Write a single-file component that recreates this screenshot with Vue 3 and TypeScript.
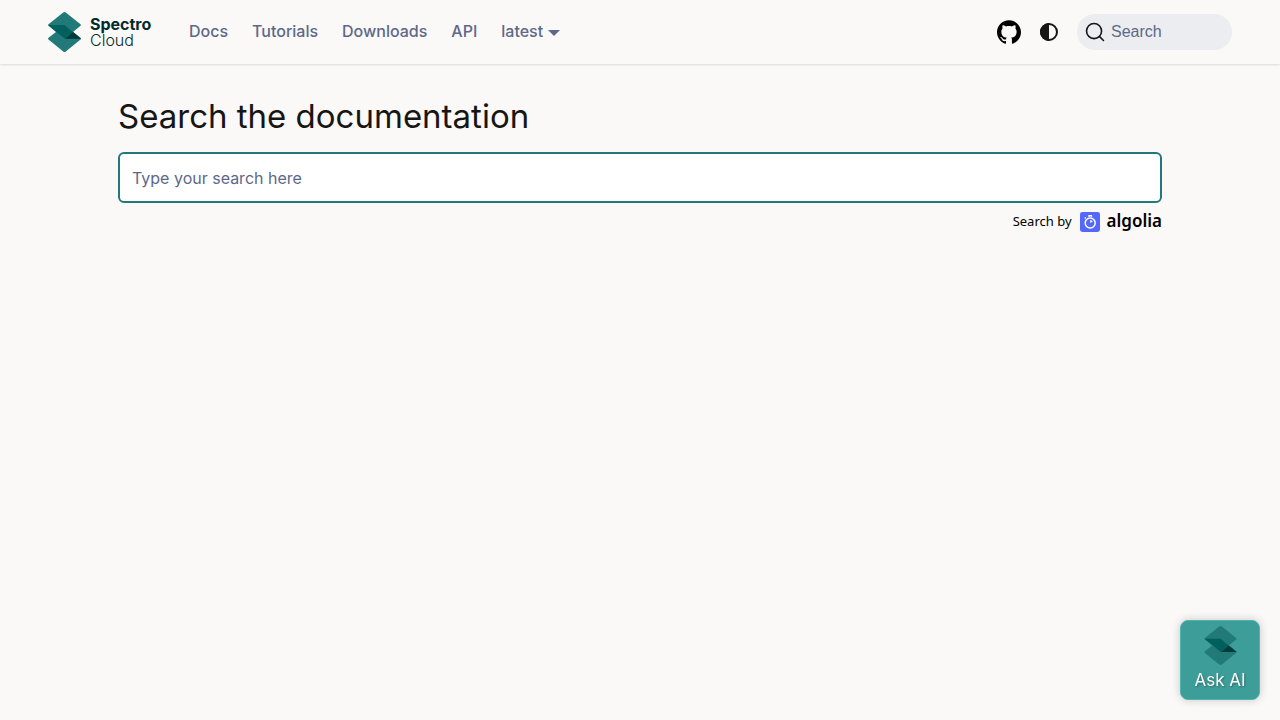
<script setup lang="ts">
import { ref } from 'vue'

const query = ref('')
const links: string[] = ['Docs', 'Tutorials', 'Downloads', 'API']
</script>

<template>
  <div class="page">
    <header class="navbar">
      <a class="brand" href="#" aria-label="Spectro Cloud">
        <svg class="mark" viewBox="0 0 33 40" aria-hidden="true">
          <path d="M15.2 .6Q16.500-.4 17.800 .6L32.500 12.200Q33.400 13 32.500 13.800L25 20 32.500 25.800Q33.400 26.700 32.500 27.600L17.800 39.400Q16.500 40.400 15.200 39.400L.5 27.600Q-.4 26.700 .5 25.800L8 20 .5 13.800Q-.4 13 .5 12.200Z" fill="#217a77" />
          <path d="M.2 13H16.500L33 26.700H16.800Z" fill="#00605e" />
          <path d="M25 20 33 26.700H17.500Z" fill="#033b3a" />
        </svg>
        <span class="wordmark"><strong>Spectro</strong><span>Cloud</span></span>
      </a>
      <nav class="links" aria-label="Main">
        <a v-for="link in links" :key="link" href="#">{{ link }}</a>
        <a class="version" href="#" aria-haspopup="true">latest</a>
      </nav>
      <div class="tools">
        <a class="github" href="#" aria-label="GitHub repository">
          <svg width="24" height="24" viewBox="0 0 24 24" aria-hidden="true">
            <path d="M12 .297c-6.63 0-12 5.373-12 12 0 5.303 3.438 9.800 8.205 11.385.6.113.82-.258.82-.577 0-.285-.01-1.040-.015-2.040-3.338.724-4.042-1.610-4.042-1.610C4.422 18.070 3.633 17.700 3.633 17.700c-1.087-.744.084-.729.084-.729 1.205.084 1.838 1.236 1.838 1.236 1.070 1.835 2.809 1.305 3.495.998.108-.776.417-1.305.76-1.605-2.665-.3-5.466-1.332-5.466-5.930 0-1.310.465-2.380 1.235-3.220-.135-.303-.54-1.523.105-3.176 0 0 1.005-.322 3.300 1.230.96-.267 1.980-.399 3-.405 1.020.006 2.040.138 3 .405 2.280-1.552 3.285-1.230 3.285-1.230.645 1.653.24 2.873.12 3.176.765.84 1.230 1.910 1.230 3.220 0 4.610-2.805 5.625-5.475 5.920.42.36.81 1.096.81 2.220 0 1.606-.015 2.896-.015 3.286 0 .315.21.69.825.57C20.565 22.092 24 17.592 24 12.297c0-6.627-5.373-12-12-12" fill="#000" />
          </svg>
        </a>
        <button class="theme" type="button" aria-label="Switch colour theme">
          <svg width="18" height="18" viewBox="0 0 18 18" aria-hidden="true">
            <circle cx="9" cy="9" r="8" fill="none" stroke="#171614" stroke-width="2" />
            <path d="M9 0A9 9 0 0 0 9 18Z" fill="#171614" />
          </svg>
        </button>
        <button class="search-button" type="button">
          <svg width="20" height="20" viewBox="0 0 20 20" aria-hidden="true">
            <path d="M14.386 14.386l4.088 4.088-4.088-4.088c-2.942 2.942-7.711 2.942-10.653 0s-2.942-7.711 0-10.653 7.711-2.942 10.653 0 2.942 7.711 0 10.653z" fill="none" stroke="#171614" stroke-width="1.6" stroke-linecap="round" stroke-linejoin="round" />
          </svg>
          <span>Search</span>
        </button>
      </div>
    </header>

    <main class="content">
      <h1>Search the documentation</h1>
      <input v-model="query" class="query" type="search" aria-label="Search" placeholder="Type your search here" />
      <a class="credit" href="#" aria-label="Search by Algolia">
        <span class="by">Search by</span>
        <svg class="stopwatch" width="20" height="20" viewBox="0 0 20 20" aria-hidden="true">
          <rect width="20" height="20" rx="2.400" fill="#5468ff" />
          <circle cx="10.200" cy="11" r="5" fill="none" stroke="#fff" stroke-width="1.500" />
          <path d="M10.200 8V11L12.800 9.600A3 3 0 0 0 10.200 8Z" fill="#fff" />
          <path d="M8.200 3.700Q8.200 3 8.900 3H11.500Q12.200 3 12.200 3.700V4.900Q10.200 4.300 8.200 4.900ZM4.300 6 5.300 5 6.300 6 5.300 7Z" fill="#fff" />
        </svg>
        <span class="algolia">algolia</span>
      </a>
    </main>

    <button class="ask" type="button">
      <svg class="ask-mark" viewBox="0 0 33 40" aria-hidden="true">
        <path d="M15.2 .6Q16.500-.4 17.800 .6L32.500 12.200Q33.400 13 32.500 13.800L25 20 32.500 25.800Q33.400 26.700 32.500 27.600L17.800 39.400Q16.500 40.400 15.200 39.400L.5 27.600Q-.4 26.700 .5 25.800L8 20 .5 13.800Q-.4 13 .5 12.200Z" fill="#217a77" />
        <path d="M.2 13H16.500L33 26.700H16.800Z" fill="#00605e" />
        <path d="M25 20 33 26.700H17.500Z" fill="#033b3a" />
      </svg>
      <span>Ask AI</span>
    </button>
  </div>
</template>

<style>
body {
  background: #faf9f7;
}
</style>

<style scoped>
.page {
  min-height: 100vh;
  background: #faf9f7;
  color: #171614;
  font-family: Inter, "Open Sans", sans-serif;
  font-size: 16px;
}
a {
  color: inherit;
  text-decoration: none;
}
button {
  border: 0;
  padding: 0;
  background: none;
  color: inherit;
  font: inherit;
  cursor: pointer;
}
svg {
  display: block;
  flex: none;
}
.navbar {
  display: flex;
  align-items: center;
  box-sizing: border-box;
  height: 64px;
  padding: 0 48px;
  box-shadow: 0 1px 2px rgba(0, 0, 0, 0.12);
}
.brand {
  display: flex;
  align-items: center;
  gap: 9px;
  width: 129px;
}
.mark {
  width: 33px;
  height: 40px;
}
.wordmark {
  display: flex;
  flex-direction: column;
  color: #032b2b;
  font-size: 16px;
  line-height: 16px;
}
.wordmark strong {
  font-weight: 700;
}
.wordmark span {
  font-weight: 300;
}
.links {
  display: flex;
  gap: 24px;
  margin-left: 12px;
  padding-bottom: 2px;
  color: #5d6889;
  font-weight: 450;
  line-height: 24px;
}
.version {
  display: flex;
  align-items: center;
  gap: 5px;
}
.version::after {
  content: "";
  margin-top: 3px;
  border: 6px solid transparent;
  border-top-color: currentColor;
  border-bottom: 0;
}
.tools {
  display: flex;
  align-items: center;
  margin-left: auto;
}
.theme {
  display: grid;
  place-items: center;
  width: 32px;
  height: 32px;
  margin: 0 12px;
}
.search-button {
  display: flex;
  align-items: center;
  gap: 6px;
  width: 155px;
  height: 36px;
  padding: 0 8px;
  border-radius: 18px;
  background: #ebedf0;
  color: #5d6889;
  font-family: "Liberation Sans", Arial, sans-serif;
}
.content {
  display: flex;
  flex-direction: column;
  max-width: 1044px;
  margin: 0 auto;
  padding: 32px 16px;
}
h1 {
  margin: 0 0 16px;
  font-size: 33px;
  font-weight: 400;
  line-height: 40px;
}
.query {
  box-sizing: border-box;
  width: 100%;
  height: 51px;
  padding: 0 12px;
  border: 2px solid #217a77;
  border-radius: 6px;
  outline: 0;
  background: #fff;
  color: #171614;
  font: inherit;
  appearance: none;
}
.query::placeholder {
  color: #5d6889;
  opacity: 1;
}
.credit {
  display: flex;
  align-items: center;
  align-self: flex-end;
  height: 24px;
  margin-top: 7px;
  color: #000;
}
.by {
  margin-right: 8px;
  padding-bottom: 2px;
  font-family: "Noto Sans", sans-serif;
  font-size: 13px;
}
.algolia {
  margin-left: 7px;
  padding-bottom: 2px;
  font-family: "Noto Sans", sans-serif;
  font-size: 17px;
  font-weight: 600;
  line-height: 20px;
}
.ask {
  position: fixed;
  right: 20px;
  bottom: 20px;
  display: flex;
  flex-direction: column;
  align-items: center;
  box-sizing: border-box;
  width: 80px;
  height: 80px;
  padding-top: 5px;
  border: 1px solid #4eb5ad;
  border-radius: 8px;
  background: #3d9d99;
  box-shadow: 0 0 8px rgba(0, 0, 0, 0.2);
  color: #fff;
  font-size: 17px;
  line-height: 30px;
  text-shadow: 1px 1px 2px rgba(0, 0, 0, 0.3);
}
.ask-mark {
  width: 33px;
  height: 39px;
}
</style>
